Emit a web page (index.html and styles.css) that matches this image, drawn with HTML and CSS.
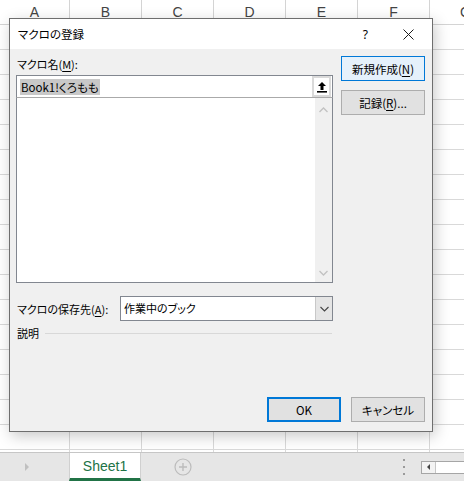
FILE: index.html
```html
<!doctype html>
<html>
 <head>
  <meta charset="UTF-8">
  <title>マクロの登録</title>
  <link rel="stylesheet" href="styles.css">
 </head>
 <body>
  <!-- 背景のシート -->
  <div class="excel">
	<div class="colhead">
		<div class="col">A</div>
		<div class="col">B</div>
		<div class="col">C</div>
		<div class="col">D</div>
		<div class="col">E</div>
		<div class="col">F</div>
		<div class="col">G</div>
	</div>
	<div class="cells"></div>
	<div class="tabbar">
		<span class="tab-prev"></span>
		<div class="tab">Sheet1</div>
		<svg class="addsheet" width="18" height="18" viewBox="0 0 18 18">
			<circle cx="9" cy="9" r="8" fill="none" stroke="#bcbcbc" stroke-width="1.2"/>
			<path d="M9 5v8M5 9h8" stroke="#bcbcbc" stroke-width="1.4"/>
		</svg>
		<span class="spacer"></span>
		<svg class="dots" width="4" height="18" viewBox="0 0 4 18">
			<rect x="1" y="1" width="2" height="2" fill="#9a9a9a"/>
			<rect x="1" y="8" width="2" height="2" fill="#9a9a9a"/>
			<rect x="1" y="15" width="2" height="2" fill="#9a9a9a"/>
		</svg>
		<div class="hscroll">
			<span class="hs-left"><i></i></span>
			<span class="hs-track"></span>
		</div>
	</div>
  </div>

  <!-- ダイアログ -->
  <div class="dialog">
	<div class="dlg-title">
		<span class="dlg-caption">マクロの登録</span>
		<span class="dlg-help">?</span>
		<svg class="dlg-close" width="11" height="11" viewBox="0 0 11 11">
			<path d="M0.5 0.5L10.5 10.5M10.5 0.5L0.5 10.5" stroke="#1a1a1a" stroke-width="1"/>
		</svg>
	</div>
	<div class="dlg-body">
		<div class="main">
			<div class="left">
				<div class="label">マクロ名(<u>M</u>):</div>
				<div class="namebox">
					<span class="sel">Book1!くろもも</span>
					<span class="refbtn">
						<svg width="10" height="12" viewBox="0 0 10 12">
							<path d="M5 1L1 5h2.5v4h3V5H9z" fill="#000"/>
							<rect x="0" y="10" width="10" height="1.6" fill="#000"/>
						</svg>
					</span>
				</div>
				<div class="listbox">
					<div class="list-area"></div>
					<div class="vscroll">
						<svg width="9" height="6" viewBox="0 0 9 6"><path d="M0.5 5L4.5 1l4 4" fill="none" stroke="#c2c2c2" stroke-width="1.3"/></svg>
						<svg width="9" height="6" viewBox="0 0 9 6"><path d="M0.5 1l4 4 4-4" fill="none" stroke="#c2c2c2" stroke-width="1.3"/></svg>
					</div>
				</div>
			</div>
			<div class="right">
				<div class="btn hot">新規作成(<u>N</u>)</div>
				<div class="btn">記録(<u>R</u>)...</div>
			</div>
		</div>
		<div class="saverow">
			<div class="savelabel">マクロの保存先(<u>A</u>):</div>
			<div class="combo">
				<span class="combo-text">作業中のブック</span>
				<span class="combo-btn">
					<svg width="9" height="6" viewBox="0 0 9 6"><path d="M0.5 1l4 4 4-4" fill="none" stroke="#444" stroke-width="1.1"/></svg>
				</span>
			</div>
		</div>
		<div class="descrow">
			<span>説明</span>
			<span class="rule"></span>
		</div>
		<div class="footer">
			<div class="btn wide default">OK</div>
			<div class="btn wide">キャンセル</div>
		</div>
	</div>
  </div>
 </body>
</html>
```

FILE: styles.css
```css
	*{
		margin:0;
		padding:0;
		box-sizing:border-box;
	}
	body{
		width:464px;
		height:481px;
		overflow:hidden;
		position:relative;
		background:#fff;
		font-family:"Noto Sans CJK JP","Noto Sans",sans-serif;
		font-size:11px;
		font-feature-settings:"palt";
		color:#000;
	}

	/* シート */
	.excel{
		display:flex;
		flex-direction:column;
		height:481px;
	}
	.colhead{
		display:flex;
		height:25px;
		border-bottom:1px solid #d4d4d4;
		font-family:"Liberation Sans",sans-serif;
		font-size:14px;
		color:#444;
		overflow:hidden;
	}
	.col{
		flex:none;
		width:72px;
		border-right:1px solid #d4d4d4;
		text-align:center;
		line-height:24px;
	}
	.col:first-child{
		width:70px;
	}
	.col:last-child{
		width:35px;
		text-align:right;
		padding-right:0;
		border-right:none;
		text-indent:30px;
		overflow:hidden;
	}
	.cells{
		flex:1;
		background-image:
			linear-gradient(to bottom, transparent 24px, #d9d9d9 24px),
			linear-gradient(to right, transparent 71px, #d9d9d9 71px);
		background-size:100% 25px, 72px 100%;
		background-position:0 0, -2px 0;
	}
	.tabbar{
		flex:none;
		height:29px;
		border-top:1px solid #c6c6c6;
		background:#e6e6e6;
		display:flex;
		align-items:center;
	}
	.tab-prev{
		width:0;
		height:0;
		margin-left:25px;
		margin-right:40px;
		border-left:4px solid #c0c0c0;
		border-top:4px solid transparent;
		border-bottom:4px solid transparent;
	}
	.tab{
		align-self:stretch;
		width:72px;
		background:#fff;
		border-left:1px solid #d0d0d0;
		border-right:1px solid #d0d0d0;
		border-bottom:3px solid #217346;
		color:#217346;
		font-family:"Liberation Sans",sans-serif;
		font-size:14px;
		text-align:center;
		line-height:26px;
	}
	.addsheet{
		margin-left:33px;
	}
	.spacer{
		flex:1;
	}
	.dots{
		margin-right:15px;
	}
	.hscroll{
		display:flex;
		width:43px;
		height:13px;
		border:1px solid #a6a6a6;
		border-right:none;
		background:#fff;
	}
	.hs-left{
		width:14px;
		border-right:1px solid #c6c6c6;
		background:#f3f3f3;
		display:flex;
		align-items:center;
		justify-content:center;
	}
	.hs-left i{
		width:0;
		height:0;
		border-right:3px solid #444;
		border-top:3px solid transparent;
		border-bottom:3px solid transparent;
	}
	.hs-track{
		flex:1;
	}

	/* ダイアログ */
	.dialog{
		position:absolute;
		left:9px;
		top:18px;
		width:424px;
		height:414px;
		border:1px solid #6e6e6e;
		background:#f0f0f0;
		box-shadow:2px 4px 14px rgba(0,0,0,0.22);
		display:flex;
		flex-direction:column;
	}
	.dlg-title{
		height:30px;
		background:#fff;
		display:flex;
		align-items:center;
		padding-left:8px;
		font-size:11.5px;
	}
	.dlg-caption{
		flex:1;
	}
	.dlg-help{
		font-family:"Noto Sans",sans-serif;
		font-size:12px;
		margin-right:35px;
	}
	.dlg-close{
		margin-right:18px;
	}
	.dlg-body{
		flex:1;
		display:flex;
		flex-direction:column;
		padding:6px 7px 9px 6px;
	}
	.main{
		display:grid;
		grid-template-columns:317px 84px;
		column-gap:8px;
	}
	.label{
		height:20px;
		line-height:19px;
		padding-left:1px;
	}
	u{
		text-decoration-thickness:1px;
		text-underline-offset:2px;
	}
	.namebox{
		height:23px;
		border:1px solid #828790;
		border-bottom-color:#aaa;
		background:#fff;
		display:flex;
		align-items:center;
		padding-left:3px;
		padding-right:1px;
	}
	.sel{
		flex:none;
		line-height:16px;
		background:#c8c8c8;
		padding:0 1px;
		font-size:11.5px;
	}
	.namebox .refbtn{
		margin-left:auto;
		width:19px;
		height:21px;
		border:2px solid #dadada;
		background:#fff;
		display:flex;
		align-items:center;
		justify-content:center;
	}
	.listbox{
		height:185px;
		border:1px solid #828790;
		border-top:none;
		background:#fff;
		display:flex;
	}
	.list-area{
		flex:1;
	}
	.vscroll{
		width:17px;
		background:#f0f0f0;
		display:flex;
		flex-direction:column;
		justify-content:space-between;
		align-items:center;
		padding:9px 0 6px;
	}
	.right{
		padding-top:1px;
		display:flex;
		flex-direction:column;
		gap:9px;
	}
	.btn{
		height:25px;
		border:1px solid #adadad;
		background:#e1e1e1;
		display:flex;
		align-items:center;
		justify-content:center;
		font-size:11.5px;
	}
	.btn.hot{
		background:#e5f1fb;
		border-color:#0078d7;
	}
	.btn.wide{
		width:74px;
	}
	.btn.default{
		border:2px solid #0078d7;
	}
	.saverow{
		display:flex;
		align-items:center;
		margin-top:13px;
		height:25px;
	}
	.savelabel{
		width:104px;
		padding-left:1px;
	}
	.combo{
		width:213px;
		height:25px;
		border:1px solid #828790;
		background:#fff;
		display:flex;
	}
	.combo-text{
		flex:1;
		padding-left:3px;
		line-height:23px;
	}
	.combo-btn{
		width:17px;
		background:#e5e5e5;
		border-left:1px solid #c8c8c8;
		display:flex;
		align-items:center;
		justify-content:center;
	}
	.descrow{
		display:flex;
		align-items:center;
		margin-top:3px;
		height:18px;
		width:316px;
		padding-left:1px;
	}
	.rule{
		flex:1;
		height:1px;
		margin-left:6px;
		background:#d8d8d8;
	}
	.footer{
		margin-top:auto;
		display:flex;
		justify-content:flex-end;
		gap:10px;
	}
```
